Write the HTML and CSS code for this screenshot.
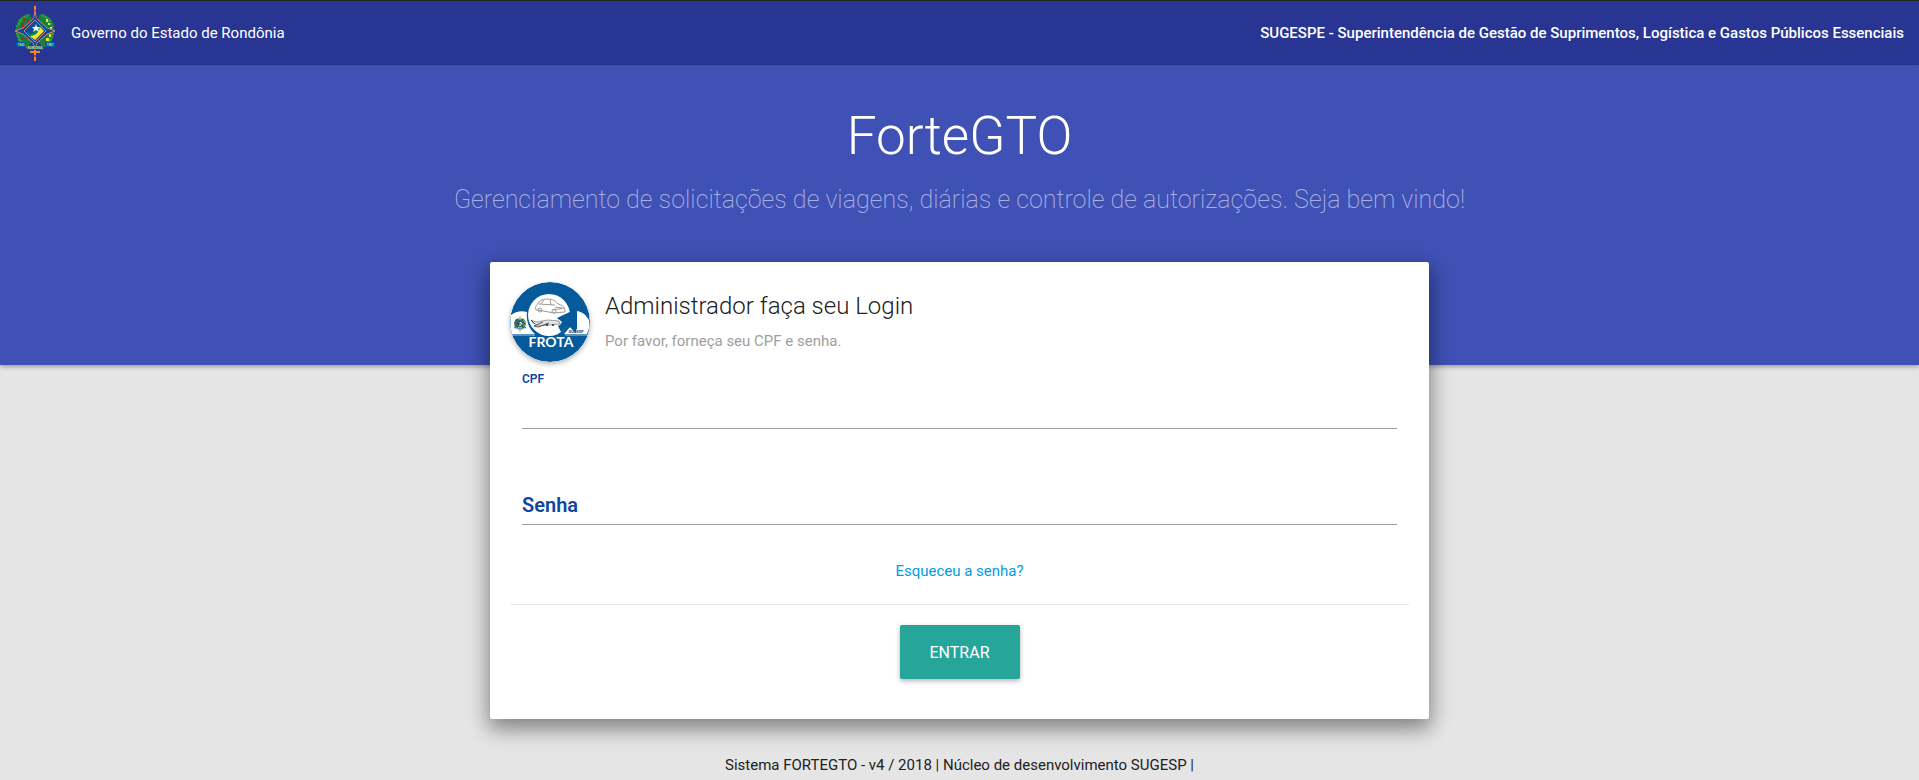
FILE: index.html
```html
<!DOCTYPE html>
<html lang="pt-BR">
<head>
<meta charset="utf-8">
<meta name="viewport" content="width=device-width, initial-scale=1">
<title>ForteGTO</title>
<link rel="stylesheet" href="styles.css">
</head>
<body>
<header class="topbar">
  <div class="brand">
    <svg class="brand-emblem" viewBox="0 0 41 55" role="img" aria-label="Brasão de Rondônia">
      <g id="emblem">
        <path d="M19 0h2v12h-2zM19 44h2v11h-2z" fill="#f08a1c"/>
        <path d="M19 4h2v2h-2zM19 49h2v2h-2z" fill="#d8381e"/>
        <path d="M15 45h10v2h-10z" fill="#f08a1c"/>
        <path d="M15 8C5 8 0 17 1 26c0 8 5 14 11 16l6-8-8-9 8-9zM25 8c10 0 15 9 14 18 0 8-5 14-11 16l-6-8 8-9-8-9z" fill="#16813a"/>
        <path d="M13 9 4 15M8 12 2 21M1 24l4 12M5 34l8 8M27 9l9 6M32 12l6 9M39 24l-4 12M35 34l-8 8" stroke="#39a34a" stroke-width="2" stroke-dasharray="2 1"/>
        <path d="M8 12h3v3h-3zM6 17h3v4h-3zM5 25h2v3h-2zM6 31h3v3h-3zM12 14h2v3h-2zM10 19h2v2h-2zM10 31h2v2h-2z" fill="#a52a24"/>
        <path d="M31 13h2v3h-2zM33 17h2v2h-2zM35 21h2v2h-2zM34 28h2v3h-2zM31 32h3v3h-3zM35 25h2v2h-2z" fill="#e8e337"/>
        <path d="M20 5c1 5 1 7 3 9l9 8 8 3-8 3-9 8c-2 2-2 4-3 8-1-4-1-6-3-8l-9-8-8-3 8-3 9-8c2-2 2-4 3-9z" fill="#064b95" stroke="#e0787f"/>
        <path d="m20 14 11 11-11 11L9 25z" fill="#06509a" stroke="#e0787f"/>
        <path d="m12 26 3 2c4 0 7-3 8-7l3-1 1 2-5 7-5 3z" fill="#1c8b3e"/>
        <path d="m15 30c6 0 9-4 10-9l4 4-9 9z" fill="#f4e928"/>
        <path d="m21 18 1 3h3l-2 2 1 3-3-2-3 2 1-3-2-2h3z" fill="#fff"/>
        <path d="M1 36h10v5H1zM30 36h10v5H30zM12 40h17v4H12z" fill="#0756a3"/>
        <g class="emblem-text">
          <text x="6" y="40">1943</text><text x="35" y="40">1981</text><text x="20" y="43">RONDONIA</text>
        </g>
      </g>
    </svg>
    <span>Governo do Estado de Rondônia</span>
  </div>
  <strong class="agency">SUGESPE - Superintendência de Gestão de Suprimentos, Logística e Gastos Públicos Essenciais</strong>
</header>

<section class="hero">
  <h1 class="hero-title">ForteGTO</h1>
  <p class="hero-text">Gerenciamento de solicitações de viagens, diárias e controle de autorizações. Seja bem vindo!</p>
</section>

<main class="card">
  <div class="card-head">
    <svg class="avatar" viewBox="0 0 80 80" role="img" aria-label="Frota">
      <circle cx="40" cy="40" r="40" fill="#045a9a"/>
      <path d="M1 33c4-3 10-5 16-3-1 9 2 17 8 22H2C0 46 0 39 1 33z" fill="#fff"/>
      <path d="M67 29c6 1 9 4 12 9 1 5 0 10-2 14H54l6-7 4 4 3-2z" fill="#fff"/>
      <circle cx="39" cy="33" r="21" fill="#fff"/>
      <path d="m47 36 19-9v24l-8-8c-2 3-4 5-7 7l-3-6c2-1 3-2 4-4z" fill="#045a9a"/>
      <g fill="none" stroke="#9a9a9a" stroke-width="1">
        <path d="M26 28c-1-3 0-5 2-6 1-3 4-5 9-5 6 0 9 2 11 5 4 1 6 3 7 5v3l-11 1-16-3z"/>
        <path d="M29 22l16 1M34 18l-3 4M40 18l1 5M43 28l11-2M45 25l7 1"/>
        <circle cx="30" cy="28" r="2"/><circle cx="44" cy="29" r="2"/>
      </g>
      <path d="m21 38 5 2 12-2 11 1 1 3-12 1-9 1-6-3z" fill="#e3e5e6" stroke="#9a9ea1"/>
      <path d="m33 40-9 4 4 1 11-4M21 38l4 4" fill="none" stroke="#4d5154"/>
      <circle cx="37" cy="43" r="1" fill="#222"/><circle cx="43" cy="43" r="1" fill="#222"/>
      <use href="#emblem" transform="translate(4 34) scale(.3)"/>
      <text class="avatar-agency" x="66" y="51">SUGESP</text>
      <path d="M1 53h24M55 53h22" stroke="#a8cbe1"/>
      <text class="avatar-name" x="41" y="65">FROTA</text>
    </svg>
    <div>
      <h2 class="card-title">Administrador faça seu Login</h2>
      <p class="card-text">Por favor, forneça seu CPF e senha.</p>
    </div>
  </div>
  <form class="login">
    <div class="field">
      <input class="field-input" id="cpf" type="text">
      <label class="field-label field-label-raised" for="cpf">CPF</label>
    </div>
    <div class="field">
      <input class="field-input" id="senha" type="password">
      <label class="field-label" for="senha">Senha</label>
    </div>
    <a class="forgot" href="#">Esqueceu a senha?</a>
    <div class="actions">
      <button class="submit" type="submit">ENTRAR</button>
    </div>
  </form>
</main>

<footer class="footer">Sistema FORTEGTO - v4 / 2018 | Núcleo de desenvolvimento SUGESP |</footer>
</body>
</html>
```

FILE: styles.css
```css
* {
  box-sizing: border-box;
}

body {
  margin: 0;
  background: #e5e5e5;
  color: #212121;
  font-family: Roboto, sans-serif;
  font-size: 15px;
  line-height: 22px;
}

h1,
h2,
p {
  margin: 0;
  font-weight: 300;
}

.topbar {
  display: flex;
  align-items: center;
  justify-content: space-between;
  min-height: 65px;
  padding: 0 15px;
  border-top: 1px solid #242424;
  background: #283593;
  color: #fff;
}

.brand {
  display: flex;
  align-items: center;
  gap: 15px;
}

.brand-emblem {
  width: 41px;
  height: 55px;
}

.emblem-text {
  fill: #d3e579;
  font: 700 3px Roboto, sans-serif;
  text-anchor: middle;
}

.agency {
  font-weight: 500;
}

.hero {
  padding: 37px 16px 148px;
  background: #3f51b5;
  box-shadow: 0 2px 4px rgba(0, 0, 0, 0.3);
  text-align: center;
}

.hero-title {
  color: #fff;
  font-size: 53px;
  line-height: 68px;
}

.hero-text {
  margin-top: 13px;
  color: #a8b0de;
  font-size: 25px;
  font-weight: 200;
  line-height: 34px;
}

.card {
  position: relative;
  max-width: 939px;
  margin: -103px auto 0;
  padding: 20px 20px 40px;
  border-radius: 2px;
  background: #fff;
  box-shadow: 0 8px 17px 2px rgba(0, 0, 0, 0.2), 0 8px 24px rgba(0, 0, 0, 0.3);
}

.card-head {
  display: flex;
  gap: 15px;
  height: 80px;
}

.avatar {
  flex: none;
  width: 80px;
  height: 80px;
  border-radius: 50%;
  box-shadow: 0 2px 5px rgba(0, 0, 0, 0.3);
}

.avatar-name {
  fill: #fff;
  font: 700 14px Lato, sans-serif;
  text-anchor: middle;
}

.avatar-agency {
  fill: #14436b;
  font: 700 4px Roboto, sans-serif;
  text-anchor: middle;
}

.card-title {
  margin-top: 8px;
  font-size: 24px;
  line-height: 32px;
}

.card-text {
  margin-top: 8px;
  color: #9e9e9e;
  font-weight: 400;
}

.field {
  position: relative;
  margin: 19px 12px 48px;
}

.field + .field {
  margin-bottom: 35px;
}

.field-input {
  display: block;
  width: 100%;
  height: 48px;
  padding: 0;
  border: 0;
  border-bottom: 1px solid #9e9e9e;
  outline: 0;
  background: transparent;
  font: inherit;
}

.field-label {
  position: absolute;
  top: 18px;
  left: 0;
  color: #0d47a1;
  font-size: 20px;
  font-weight: 600;
  line-height: 20px;
  cursor: text;
}

.field-label-raised {
  top: -12px;
  font-size: 12px;
}

.forgot {
  display: block;
  width: fit-content;
  margin: 0 auto;
  color: #039be5;
  text-decoration: none;
}

.actions {
  margin-top: 22px;
  padding-top: 20px;
  border-top: 1px solid #e8e8e8;
  text-align: center;
}

.submit {
  display: block;
  min-width: 120px;
  height: 54px;
  margin: 0 auto;
  border: 0;
  border-radius: 2px;
  background: #26a69a;
  box-shadow: 0 2px 5px rgba(0, 0, 0, 0.3);
  color: #fff;
  font: 400 16px Roboto, sans-serif;
}

.footer {
  margin-top: 35px;
  text-align: center;
}
```
